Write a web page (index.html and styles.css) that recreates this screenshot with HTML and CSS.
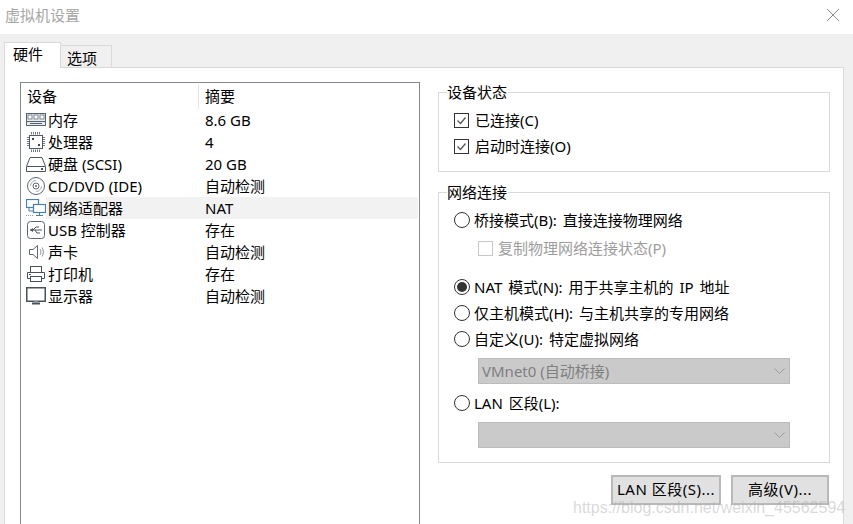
FILE: index.html
```html
<!DOCTYPE html>
<html lang="zh-CN">
<head>
  <meta charset="UTF-8" />
  <title>虚拟机设置</title>
  <link rel="stylesheet" href="styles.css">
</head>
<body>
  <div class="titlebar">
    <span class="title">虚拟机设置</span>
    <svg class="close" width="14" height="14" viewBox="0 0 14 14"><path d="M1 1L13 13M13 1L1 13" stroke="#8c8c8c" stroke-width="1" fill="none"/></svg>
  </div>

  <div class="dialog">
    <div class="tabs">
      <div class="tab active">硬件</div>
      <div class="tab">选项</div>
    </div>

    <div class="panel">
      <div class="devices">
        <div class="devices-head">
          <div class="head-cell head-name">设备</div>
          <div class="head-cell">摘要</div>
        </div>

        <div class="device">
          <svg class="icon" width="20" height="18" viewBox="0 0 20 18"><rect x="0.500" y="2.500" width="19" height="12" fill="#e8ebee" stroke="#56646f"/><rect x="2" y="4" width="4" height="4" fill="#fff" stroke="#66737e" stroke-width="0.800"/><rect x="8" y="4" width="4" height="4" fill="#fff" stroke="#66737e" stroke-width="0.800"/><rect x="14" y="4" width="4" height="4" fill="#fff" stroke="#66737e" stroke-width="0.800"/><path d="M1 10.500H19M4 12.500H16" stroke="#56646f"/></svg>
          <div class="device-body"><span class="device-name">内存</span><span>8.6 GB</span></div>
        </div>
        <div class="device">
          <svg class="icon" width="20" height="20" viewBox="0 0 20 20"><rect x="3.500" y="3.500" width="13" height="13" fill="#fff" stroke="#4f5b66"/><path d="M5.500 0V2.500M7.500 0V2.500M9.500 0V2.500M11.500 0V2.500M13.500 0V2.500M5.500 17.500V20M7.500 17.500V20M9.500 17.500V20M11.500 17.500V20M13.500 17.500V20M1 5.500H3M1 7.500H3M1 9.500H3M1 11.500H3M1 13.500H3M17 5.500H19M17 7.500H19M17 9.500H19M17 11.500H19M17 13.500H19" stroke="#6f7b86"/><rect x="6" y="6" width="2" height="2" fill="#3c4852"/><rect x="12" y="12" width="2" height="2" fill="#3c4852"/></svg>
          <div class="device-body"><span class="device-name">处理器</span><span>4</span></div>
        </div>
        <div class="device">
          <svg class="icon" width="20" height="18" viewBox="0 0 20 18"><path d="M0.500 11.500L4 2.500H16L19.500 11.500V16.500H0.500Z" fill="#fff" stroke="#4a5560"/><path d="M1 11.500H19" stroke="#4a5560"/><rect x="15" y="13" width="2" height="2" fill="#4a5560"/></svg>
          <div class="device-body"><span class="device-name">硬盘 (SCSI)</span><span>20 GB</span></div>
        </div>
        <div class="device">
          <svg class="icon" width="20" height="20" viewBox="0 0 20 20"><circle cx="10" cy="10" r="8.500" fill="#fff" stroke="#5c6770"/><circle cx="10" cy="10" r="3" fill="#fff" stroke="#5c6770"/><circle cx="10" cy="10" r="1" fill="#5c6770"/><path d="M4.500 10A5.500 5.500 0 0 1 10 4.500M15.500 10A5.500 5.500 0 0 1 10 15.500" stroke="#a5adb4" fill="none"/></svg>
          <div class="device-body"><span class="device-name">CD/DVD (IDE)</span><span>自动检测</span></div>
        </div>
        <div class="device">
          <svg class="icon" width="20" height="18" viewBox="0 0 20 18"><rect x="0.500" y="0.500" width="12" height="8" fill="#fff" stroke="#4d7fa6" stroke-width="1.200"/><rect x="7.500" y="5.500" width="12" height="8" fill="#fff" stroke="#4d7fa6" stroke-width="1.200"/><path d="M13.500 14V16M10 16.500H17M3 9V12H7" stroke="#4d7fa6" fill="none"/><path d="M0 16.500H8" stroke="#8f9ba5" stroke-dasharray="1 1"/></svg>
          <div class="device-body selected"><span class="device-name">网络适配器</span><span>NAT</span></div>
        </div>
        <div class="device">
          <svg class="icon" width="20" height="18" viewBox="0 0 20 18"><rect x="1.500" y="0.500" width="17" height="17" rx="3" fill="#fff" stroke="#5c6770"/><path d="M4 9H16M7 9L10 6H13M9 9L11 12H14" stroke="#4c5761" fill="none"/><path d="M4 9L7 7V11Z" fill="#4c5761"/></svg>
          <div class="device-body"><span class="device-name">USB 控制器</span><span>存在</span></div>
        </div>
        <div class="device">
          <svg class="icon" width="20" height="18" viewBox="0 0 20 18"><path d="M3.500 6.500H7L11.500 2.500V15.500L7 11.500H3.500Z" fill="#fff" stroke="#5c6770"/><path d="M14 6C15.200 8 15.200 10 14 12M16 4.500C17.800 7.500 17.800 10.500 16 13.500" stroke="#8a949c" fill="none"/></svg>
          <div class="device-body"><span class="device-name">声卡</span><span>自动检测</span></div>
        </div>
        <div class="device">
          <svg class="icon" width="20" height="18" viewBox="0 0 20 18"><rect x="4.500" y="1.500" width="11" height="6" fill="#fff" stroke="#46515b"/><path d="M4.500 13.500H1.500V7.500H18.500V13.500H15.500" fill="#fff" stroke="#46515b"/><rect x="4.500" y="11.500" width="11" height="5" fill="#fff" stroke="#46515b"/><rect x="3" y="9" width="2" height="1" fill="#46515b"/></svg>
          <div class="device-body"><span class="device-name">打印机</span><span>存在</span></div>
        </div>
        <div class="device">
          <svg class="icon" width="20" height="18" viewBox="0 0 20 18"><rect x="0.750" y="0.750" width="18.500" height="13.500" fill="#fff" stroke="#46515b" stroke-width="1.500"/><path d="M6 16.500H14" stroke="#46515b" stroke-width="2"/><path d="M8 14H12V16H8Z" fill="#8a949c"/></svg>
          <div class="device-body"><span class="device-name">显示器</span><span>自动检测</span></div>
        </div>
      </div>

      <div class="settings">
        <fieldset class="group group-status">
          <legend>设备状态</legend>
          <div class="option">
            <span class="box"><svg width="13" height="13" viewBox="0 0 13 13"><path d="M2.500 6.500L5.500 9.500L10.500 3.500" stroke="#555" stroke-width="1.300" fill="none"/></svg></span>
            已连接(C)
          </div>
          <div class="option">
            <span class="box"><svg width="13" height="13" viewBox="0 0 13 13"><path d="M2.500 6.500L5.500 9.500L10.500 3.500" stroke="#555" stroke-width="1.300" fill="none"/></svg></span>
            启动时连接(O)
          </div>
        </fieldset>

        <fieldset class="group group-network">
          <legend>网络连接</legend>
          <div class="option"><span class="radio"></span>桥接模式(B): 直接连接物理网络</div>
          <div class="option option-sub disabled"><span class="box box-off"></span>复制物理网络连接状态(P)</div>
          <div class="option option-nat"><span class="radio checked"></span>NAT 模式(N): 用于共享主机的 IP 地址</div>
          <div class="option"><span class="radio"></span>仅主机模式(H): 与主机共享的专用网络</div>
          <div class="option"><span class="radio"></span>自定义(U): 特定虚拟网络</div>
          <div class="select">
            VMnet0 (自动桥接)
            <svg class="chevron" width="11" height="6" viewBox="0 0 11 6"><path d="M0.500 0.500L5.500 5.500L10.500 0.500" stroke="#9a9a9a" fill="none"/></svg>
          </div>
          <div class="option option-lan"><span class="radio"></span>LAN 区段(L):</div>
          <div class="select">
            <svg class="chevron" width="11" height="6" viewBox="0 0 11 6"><path d="M0.500 0.500L5.500 5.500L10.500 0.500" stroke="#9a9a9a" fill="none"/></svg>
          </div>
        </fieldset>

        <div class="actions">
          <div class="btn btn-lan">LAN 区段(S)...</div>
          <div class="btn btn-adv">高级(V)...</div>
        </div>
      </div>
    </div>
  </div>

  <div class="watermark">https://blog.csdn.net/weixin_45562594</div>
</body>
</html>
```

FILE: styles.css
```css
html, body {
  margin: 0;
  height: 524px;
  overflow: hidden;
}
body {
  position: relative;
  display: flex;
  flex-direction: column;
  background: #f0f0f0;
  color: #000;
  font-family: "Noto Sans", "Noto Sans CJK SC", sans-serif;
  font-size: 15px;
  line-height: 20px;
}
.titlebar {
  height: 34px;
  padding: 0 13px 0 5px;
  background: #fff;
  display: flex;
  justify-content: space-between;
  align-items: center;
}
.title {
  color: #a6a6a6;
  margin-top: -4px;
}
.close {
  margin-top: -4px;
}
.dialog {
  flex: 1;
  min-height: 0;
  padding: 9px 9px 0 4px;
  display: flex;
  flex-direction: column;
}
.tabs {
  display: flex;
  align-items: flex-end;
  height: 25px;
  position: relative;
  z-index: 1;
  margin-bottom: -1px;
}
.tab {
  width: 44px;
  height: 22px;
  padding-left: 6px;
  border: 1px solid #d9d9d9;
  border-left: none;
  border-bottom: none;
  line-height: 24px;
}
.tab.active {
  width: 47px;
  height: 25px;
  padding-left: 8px;
  background: #fff;
  border-left: 1px solid #d9d9d9;
  line-height: 22px;
}
.panel {
  flex: 1;
  min-height: 0;
  background: #fff;
  border: 1px solid #d9d9d9;
  border-bottom: none;
  padding: 14px 13px 0 15px;
  display: flex;
  gap: 18px;
}
.devices {
  width: 398px;
  border: 1px solid #828790;
  border-bottom: none;
}
.devices-head {
  display: flex;
  height: 26px;
  padding-top: 2px;
  box-sizing: border-box;
  line-height: 22px;
}
.head-cell {
  padding-left: 6px;
}
.head-name {
  width: 171px;
  border-right: 1px solid #e5e5e5;
}
.device {
  display: flex;
  align-items: center;
  height: 22px;
}
.icon {
  flex: none;
  margin-left: 5px;
}
.device-body {
  flex: 1;
  display: flex;
  height: 22px;
  line-height: 22px;
  margin-left: 0;
  padding-left: 2px;
  margin-right: 1px;
}
.selected {
  background: #f2f2f2;
}
.device-name {
  width: 157px;
}
.settings {
  width: 392px;
}
.group {
  margin: 0;
  padding: 0 0 0 15px;
  border: 1px solid #d9d9d9;
  min-width: 0;
  box-sizing: border-box;
}
.group legend {
  margin-left: -7px;
  padding: 0 1px 0 0;
  line-height: 20px;
}
.group-status {
  height: 90px;
  padding-top: 5px;
}
.group-network {
  height: 281px;
  margin-top: 10px;
  padding-top: 5px;
}
.option {
  display: flex;
  align-items: center;
  height: 26px;
  word-spacing: 2px;
}
.box {
  flex: none;
  width: 13px;
  height: 13px;
  border: 1px solid #333;
  background: #fff;
  margin-right: 6px;
  display: block;
}
.box svg {
  display: block;
}
.box-off {
  border-color: #c8c8c8;
  margin-right: 5px;
}
.radio {
  flex: none;
  box-sizing: border-box;
  width: 16px;
  height: 16px;
  margin-right: 4px;
  border: 1px solid #333;
  border-radius: 50%;
  background: #fff;
  position: relative;
}
.radio.checked::after {
  content: "";
  position: absolute;
  left: 2px;
  top: 2px;
  width: 10px;
  height: 10px;
  border-radius: 50%;
  background: #333;
}
.option-sub {
  margin: 2px 0 0 24px;
}
.disabled {
  color: #9d9d9d;
}
.option-nat {
  margin-top: 13px;
}
.select {
  position: relative;
  box-sizing: border-box;
  width: 312px;
  height: 26px;
  margin: 6px 0 0 24px;
  padding-left: 3px;
  background: #cacaca;
  border: 1px solid #bbb;
  color: #7f7f7f;
  line-height: 24px;
}
.chevron {
  position: absolute;
  right: 4px;
  top: 9px;
}
.option-lan {
  margin-top: 6px;
}
.option-lan + .select {
  margin-top: 6px;
}
.actions {
  display: flex;
  justify-content: flex-end;
  gap: 10px;
  margin-top: 12px;
  padding-right: 1px;
}
.btn {
  box-sizing: border-box;
  height: 30px;
  background: #e1e1e1;
  border: 2px solid #b9b9b9;
  text-align: center;
  line-height: 25px;
  letter-spacing: 0.5px;
}
.btn-lan {
  width: 110px;
}
.btn-adv {
  width: 98px;
}
.watermark {
  position: absolute;
  left: 573px;
  top: 498px;
  font-family: "Liberation Sans", sans-serif;
  font-size: 16px;
  line-height: 20px;
  color: rgba(170, 170, 170, 0.45);
  white-space: nowrap;
}
```
